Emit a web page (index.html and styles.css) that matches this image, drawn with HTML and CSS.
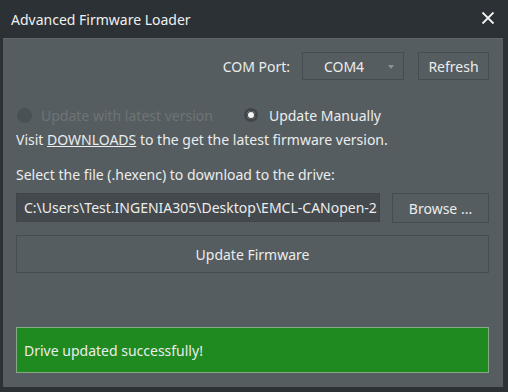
FILE: index.html
```html
<!DOCTYPE html>
<html>
<head>
    <title>Advanced Firmware Loader</title>
    <link rel="stylesheet" href="styles.css">
</head>
<body>
    <div class="dialog">
        <div class="title-bar">
            <span class="title">Advanced Firmware Loader</span>
            <span class="close">
                <svg width="14" height="14" viewBox="0 0 14 14"><path d="M1.5 1.5 L12.5 12.5 M12.5 1.5 L1.5 12.5" stroke="#f0f0f0" stroke-width="1.8"/></svg>
            </span>
        </div>
        <div class="content">
            <div class="port-row">
                <span class="port-label">COM Port:</span>
                <div class="combo">
                    <span>COM4</span>
                    <span class="arrow"></span>
                </div>
                <button class="button refresh">Refresh</button>
            </div>
            <div class="radio-row">
                <label class="radio disabled"><span class="dot"></span>Update with latest version</label>
                <label class="radio checked"><span class="dot"></span>Update Manually</label>
            </div>
            <p class="line">Visit <u>DOWNLOADS</u> to the get the latest firmware version.</p>
            <p class="line select">Select the file (.hexenc) to download to the drive:</p>
            <div class="file-row">
                <div class="path"><span>C:\Users\Test.INGENIA305\Desktop\EMCL-CANopen-2</span></div>
                <button class="button browse">Browse ...</button>
            </div>
            <button class="button update">Update Firmware</button>
            <div class="status">Drive updated successfully!</div>
        </div>
    </div>
</body>
</html>
```

FILE: styles.css
```css
body {
    margin: 0;
    font-family: "Segoe UI", "Noto Sans", sans-serif;
    font-size: 14px;
    color: #ececec;
    background-color: #2b3134;
}
.dialog {
    width: 508px;
    height: 392px;
    display: flex;
    flex-direction: column;
    background-color: #2b3134;
}
.title-bar {
    height: 38px;
    display: flex;
    align-items: center;
    justify-content: space-between;
    padding: 0 13px 0 11px;
}
.title {
    font-size: 14px;
    color: #f0f0f0;
}
.close {
    display: flex;
    margin-top: -2px;
}
.content {
    margin: 0 5px 5px 3px;
    flex: 1;
    background-color: #555d60;
    border-top: 1px solid #5f676a;
    padding: 13px 14px 0 13px;
}
.port-row {
    display: flex;
    justify-content: flex-end;
    align-items: center;
}
.port-label {
    margin-right: 12px;
}
.combo {
    width: 100px;
    height: 26px;
    border: 1px solid #464d50;
    display: flex;
    align-items: center;
    justify-content: center;
    padding-right: 18px;
    box-sizing: content-box;
    width: 82px;
    position: relative;
    margin-right: 14px;
}
.arrow {
    position: absolute;
    right: 9px;
    top: 12px;
    border-left: 3px solid transparent;
    border-right: 3px solid transparent;
    border-top: 4px solid #8a9194;
}
.button {
    font-family: inherit;
    font-size: 14px;
    color: #ececec;
    background-color: #555d60;
    border: 1px solid #464d50;
    padding: 0;
    cursor: pointer;
}
.refresh {
    width: 71px;
    height: 28px;
}
.radio-row {
    display: flex;
    gap: 31px;
    margin-top: 25px;
    height: 20px;
    align-items: center;
}
.radio {
    display: flex;
    align-items: center;
}
.dot {
    width: 15px;
    height: 15px;
    border-radius: 50%;
    margin-right: 9px;
    box-sizing: border-box;
}
.disabled {
    color: #6d7477;
    margin-left: 1px;
}
.disabled .dot {
    background-color: #4a5154;
}
.checked .dot {
    width: 14px;
    height: 14px;
    background-color: #f4f4f4;
    border: 3px solid #40464a;
    box-shadow: inset 0 0 0 1px #40464a;
    margin-right: 11px;
}
.line {
    margin: 5px 0 0 0;
    line-height: 20px;
}
.select {
    margin-top: 15px;
}
.file-row {
    display: flex;
    margin-top: 8px;
    gap: 12px;
}
.path {
    width: 364px;
    height: 29px;
    background-color: #43494c;
    border: 1px solid #3f4548;
    box-sizing: border-box;
    line-height: 27px;
    padding-left: 7px;
    white-space: nowrap;
    overflow: hidden;
}
.browse {
    width: 97px;
    height: 30px;
}
.update {
    display: block;
    width: 473px;
    height: 38px;
    margin-top: 12px;
}
.status {
    margin-top: 54px;
    height: 46px;
    background-color: #1f8a1f;
    border: 1px solid #86a886;
    box-sizing: border-box;
    display: flex;
    align-items: center;
    padding-left: 7px;
}
```
